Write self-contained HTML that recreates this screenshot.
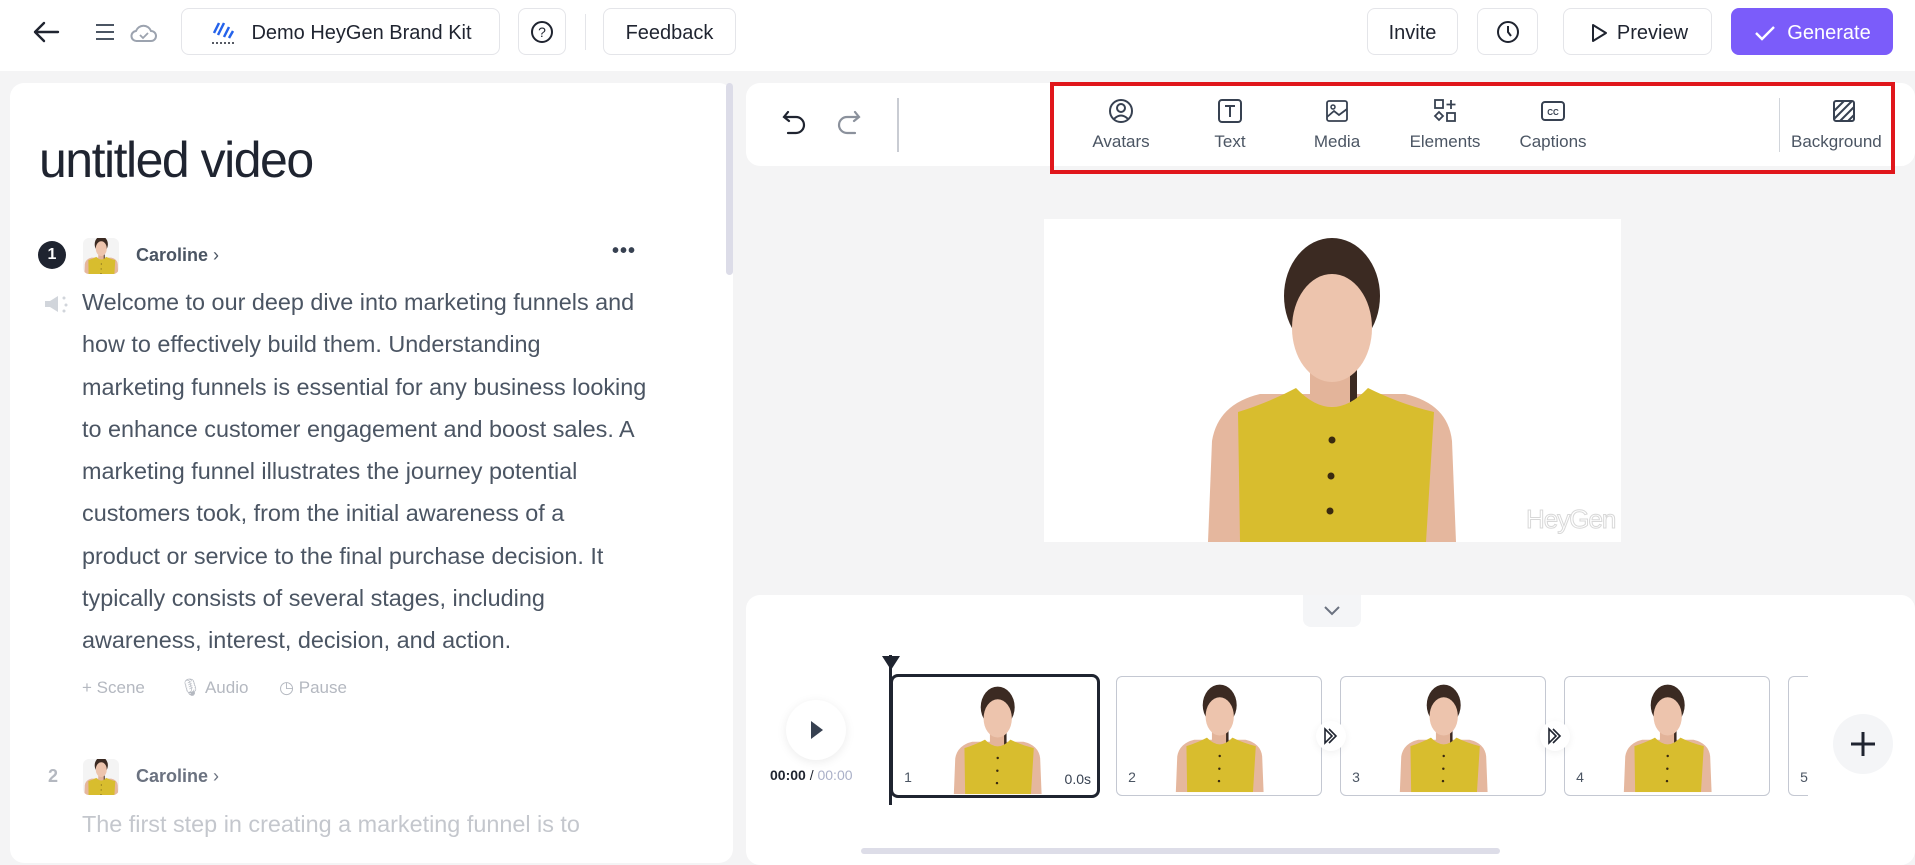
<!DOCTYPE html>
<html><head><meta charset="utf-8"><style>
*{box-sizing:border-box;margin:0;padding:0}
body{width:1915px;height:852px;overflow:hidden;background:#f4f4f5;font-family:"Liberation Sans",sans-serif;position:relative;color:#1f2430}
.a{position:absolute}
.btn{position:absolute;top:8px;height:47px;border:1px solid #e4e5e9;border-radius:8px;background:#fff;display:flex;align-items:center;justify-content:center;font-size:20px;color:#1f2430;padding-top:3px}
.tool{position:absolute;top:98px;width:110px;text-align:center;font-size:17px;color:#4b5563}
.tool svg{display:block;margin:0 auto 8px}
.line{position:absolute;left:82px;font-size:23.4px;color:#4b5563;white-space:nowrap}
.thumb{position:absolute;top:676px;height:120px;border:1px solid #c4c8d2;border-radius:6px;background:#fff;overflow:hidden}
.num{position:absolute;left:6px;bottom:6px;font-size:14px;color:#4b5563;width:18px;height:24px;border-radius:10px;background:#fff;text-align:center;line-height:24px}
</style></head><body>
<svg width="0" height="0" style="position:absolute"><defs><symbol id="p" viewBox="0 0 260 306">
<path d="M8 306 L12 205 Q18 168 60 158 L205 158 Q248 168 252 205 L256 306 Z" fill="#e5b79e"/>
<rect x="110" y="110" width="44" height="60" fill="#e3b49a"/>
<ellipse cx="132" cy="60" rx="48" ry="58" fill="#3b2a22"/>
<rect x="150" y="90" width="7" height="110" fill="#3b2a22"/>
<ellipse cx="132" cy="92" rx="40" ry="54" fill="#edc4ad"/>
<path d="M40 306 L38 176 Q70 166 96 152 Q132 190 168 152 Q200 168 234 176 L226 306 Z" fill="#d8bd2e"/>
<circle cx="132" cy="204" r="3.5" fill="#3a2a10"/><circle cx="131" cy="240" r="3.5" fill="#3a2a10"/><circle cx="130" cy="275" r="3.5" fill="#3a2a10"/>
</symbol></defs></svg>

<!-- top bar -->
<div class="a" style="left:0;top:0;width:1915px;height:71px;background:#fff"></div>
<svg class="a" style="left:32px;top:20px" width="28" height="24" viewBox="0 0 28 24"><path d="M26 12H3M12 3L3 12l9 9" fill="none" stroke="#1f2430" stroke-width="2.4" stroke-linecap="round" stroke-linejoin="round"/></svg>
<svg class="a" style="left:94px;top:22px" width="22" height="20"><path d="M2 3h18M2 10h18M2 17h18" stroke="#4b5563" stroke-width="2"/></svg>
<svg class="a" style="left:130px;top:20px" width="28" height="24" viewBox="0 0 28 24"><path d="M7 21a5 5 0 0 1-1-10 8 8 0 0 1 15 0 5 5 0 0 1 0 10z" fill="none" stroke="#9ca3af" stroke-width="2"/><path d="M10 15l3 3 5-5" fill="none" stroke="#9ca3af" stroke-width="1.8"/></svg>
<div class="btn" style="left:181px;width:319px"><svg width="30" height="28" viewBox="0 0 30 28" style="margin-right:12px"><path d="M10 4l-5 10M15 4l-6 12M20 8l-5 10M24 12l-4 7" stroke="#2563eb" stroke-width="2.5"/><path d="M3 24h24" stroke="#1f2430" stroke-width="1.5" stroke-dasharray="2 2"/></svg>Demo HeyGen Brand Kit</div>
<div class="btn" style="left:518px;width:48px;padding-top:0"><svg width="24" height="24"><circle cx="12" cy="12" r="10" fill="none" stroke="#1f2430" stroke-width="2"/><text x="12" y="17" font-size="14" text-anchor="middle" fill="#1f2430" font-family="Liberation Sans">?</text></svg></div>
<div class="a" style="left:585px;top:14px;width:1px;height:36px;background:#e4e5e9"></div>
<div class="btn" style="left:603px;width:133px">Feedback</div>
<div class="btn" style="left:1367px;width:91px">Invite</div>
<div class="btn" style="left:1477px;width:61px;padding-top:0"><svg width="24" height="24"><circle cx="12" cy="12" r="10" fill="none" stroke="#1f2430" stroke-width="2"/><path d="M12 6v6l3 4" fill="none" stroke="#1f2430" stroke-width="2"/></svg></div>
<div class="btn" style="left:1563px;width:149px"><svg width="22" height="22" style="margin-right:8px"><path d="M6 3l13 8-13 8z" fill="none" stroke="#1f2430" stroke-width="2" stroke-linejoin="round"/></svg>Preview</div>
<div class="btn" style="left:1731px;width:162px;background:#7b5cfa;border-color:#7b5cfa;color:#fff"><svg width="24" height="20" style="margin-right:10px"><path d="M3 10l6 6L21 4" fill="none" stroke="#fff" stroke-width="2.4"/></svg>Generate</div>

<!-- left panel -->
<div class="a" style="left:10px;top:83px;width:723px;height:780px;background:#fff;border-radius:14px"></div>
<div class="a" style="left:726px;top:83px;width:7px;height:192px;background:#dcdce8;border-radius:4px"></div>
<div class="a" style="left:39px;top:131px;font-size:50px;color:#1f2430;letter-spacing:-1.5px">untitled video</div>
<div class="a" style="left:38px;top:241px;width:28px;height:28px;border-radius:50%;background:#1f2430;color:#fff;font-size:16px;font-weight:bold;text-align:center;line-height:28px">1</div>
<div class="a" style="left:83px;top:238px;width:36px;height:36px;border-radius:6px;background:#f4f4f4;overflow:hidden"><svg width="36" height="42" viewBox="0 0 260 306" style="margin-top:-2px"><use href="#p"/></svg></div>
<div class="a" style="left:136px;top:245px;font-size:18px;font-weight:bold;color:#4b5563">Caroline <span style="font-weight:normal">›</span></div>
<div class="a" style="left:612px;top:240px;font-size:20px;font-weight:bold;color:#374151;letter-spacing:1px">•••</div>
<svg class="a" style="left:42px;top:293px" width="28" height="22"><path d="M3 8h5l8-5v16l-8-5H3z" fill="#d1d5db"/><circle cx="22" cy="5" r="1.5" fill="#d1d5db"/><circle cx="24" cy="12" r="1.5" fill="#d1d5db"/><circle cx="22" cy="18" r="1.5" fill="#d1d5db"/></svg>
<div class="line" style="top:289px">Welcome to our deep dive into marketing funnels and</div>
<div class="line" style="top:331px">how to effectively build them. Understanding</div>
<div class="line" style="top:374px">marketing funnels is essential for any business looking</div>
<div class="line" style="top:416px">to enhance customer engagement and boost sales. A</div>
<div class="line" style="top:458px">marketing funnel illustrates the journey potential</div>
<div class="line" style="top:500px">customers took, from the initial awareness of a</div>
<div class="line" style="top:543px">product or service to the final purchase decision. It</div>
<div class="line" style="top:585px">typically consists of several stages, including</div>
<div class="line" style="top:627px">awareness, interest, decision, and action.</div>
<div class="a" style="left:82px;top:678px;font-size:17px;color:#b4b8c0;white-space:nowrap">+ Scene <span style="margin-left:30px">🎙︎ Audio</span> <span style="margin-left:26px">◷ Pause</span></div>
<div class="a" style="left:48px;top:766px;font-size:18px;color:#b4b8c0;font-weight:bold">2</div>
<div class="a" style="left:83px;top:759px;width:36px;height:36px;border-radius:6px;background:#f4f4f4;overflow:hidden"><svg width="36" height="42" viewBox="0 0 260 306" style="margin-top:-2px"><use href="#p"/></svg></div>
<div class="a" style="left:136px;top:766px;font-size:18px;font-weight:bold;color:#6b7280">Caroline <span style="font-weight:normal">›</span></div>
<div class="line" style="top:811px;color:#c4c7cd">The first step in creating a marketing funnel is to</div>

<!-- toolbar -->
<div class="a" style="left:746px;top:83px;width:1169px;height:83px;background:#fff;border-radius:14px"></div>
<svg class="a" style="left:780px;top:108px" width="30" height="30" viewBox="0 0 30 30"><path d="M8 4L4 9l5 4M4 9h12a8 8 0 0 1 0 16H8" fill="none" stroke="#1f2430" stroke-width="2.2" stroke-linecap="round"/></svg>
<svg class="a" style="left:833px;top:108px" width="30" height="30" viewBox="0 0 30 30"><path d="M22 4l4 5-5 4M26 9H14a8 8 0 0 0 0 16h8" fill="none" stroke="#8b919c" stroke-width="2.2" stroke-linecap="round"/></svg>
<div class="a" style="left:897px;top:98px;width:2px;height:54px;background:#c9ccd3"></div>
<div class="a" style="left:1050px;top:82px;width:845px;height:92px;border:4px solid #e0161b"></div>
<div class="tool" style="left:1066px"><svg width="26" height="26"><circle cx="13" cy="13" r="11" fill="none" stroke="#374151" stroke-width="2"/><circle cx="13" cy="10" r="4" fill="none" stroke="#374151" stroke-width="2"/><path d="M6 21q7-7 14 0" fill="none" stroke="#374151" stroke-width="2"/></svg>Avatars</div>
<div class="tool" style="left:1175px"><svg width="26" height="26"><rect x="2" y="2" width="22" height="22" rx="3" fill="none" stroke="#374151" stroke-width="2"/><path d="M8 8h10M13 8v11" stroke="#374151" stroke-width="2"/></svg>Text</div>
<div class="tool" style="left:1282px"><svg width="26" height="26"><rect x="3" y="3" width="20" height="20" rx="2" fill="none" stroke="#374151" stroke-width="1.8"/><circle cx="9" cy="9" r="2" fill="none" stroke="#374151" stroke-width="1.5"/><path d="M3 19l7-6 5 4 8-6" fill="none" stroke="#374151" stroke-width="1.8"/></svg>Media</div>
<div class="tool" style="left:1390px"><svg width="26" height="26"><rect x="3" y="2" width="8" height="8" fill="none" stroke="#374151" stroke-width="1.8"/><path d="M19 2v9M14.5 6.5h9" stroke="#374151" stroke-width="1.8"/><path d="M7 14l4 4-4 4-4-4z" fill="none" stroke="#374151" stroke-width="1.8"/><rect x="15" y="15" width="8" height="8" fill="none" stroke="#374151" stroke-width="1.8"/></svg>Elements</div>
<div class="tool" style="left:1498px"><svg width="26" height="26"><rect x="2" y="4" width="22" height="18" rx="3" fill="none" stroke="#374151" stroke-width="2"/><text x="13" y="17" font-size="8" font-weight="bold" text-anchor="middle" fill="#374151" font-family="Liberation Sans">CC</text></svg>Captions</div>
<div class="a" style="left:1779px;top:98px;width:1px;height:54px;background:#d1d5db"></div>
<div class="tool" style="left:1788px;text-align:left;padding-left:3px;width:103px;overflow:hidden;white-space:nowrap"><svg width="26" height="26" style="margin:0 0 8px 40px"><rect x="3" y="3" width="20" height="20" rx="2" fill="none" stroke="#374151" stroke-width="2"/><path d="M3 13L13 3M3 21L21 3M9 23L23 9M17 23L23 17" stroke="#374151" stroke-width="2"/></svg>Background</div>

<!-- preview -->
<div class="a" style="left:1044px;top:219px;width:577px;height:323px;background:#fff;overflow:hidden">
<svg class="a" style="left:156px;top:17px" width="260" height="306" viewBox="0 0 260 306"><use href="#p"/></svg>
<div class="a" style="left:482px;top:285px;font-size:26px;color:#fff;-webkit-text-stroke:1px #d8d8d8;letter-spacing:-1px">HeyGen</div>
</div>

<!-- timeline -->
<div class="a" style="left:746px;top:595px;width:1169px;height:270px;background:#fff;border-radius:14px"></div>
<div class="a" style="left:1303px;top:595px;width:58px;height:32px;background:#f4f5f7;border-radius:0 0 8px 8px"><svg width="58" height="32"><path d="M22 12l7 7 7-7" fill="none" stroke="#6b7280" stroke-width="2"/></svg></div>
<div class="a" style="left:786px;top:700px;width:60px;height:60px;border-radius:50%;background:#fff;box-shadow:0 2px 10px rgba(0,0,0,.08)"><svg width="60" height="60"><path d="M25 21l12 9-12 9z" fill="#374151"/></svg></div>
<div class="a" style="left:770px;top:767px;font-size:14px;color:#1f2430;font-weight:bold">00:00 <span style="font-weight:normal;color:#1f2430">/</span> <span style="color:#aab0c8;font-weight:normal">00:00</span></div>
<div class="thumb" style="left:890px;top:674px;width:210px;height:124px;border:3px solid #1f2430;border-radius:8px"><svg class="a" style="left:58px;top:8px" width="92" height="110" viewBox="0 0 260 306"><use href="#p"/></svg><div class="num">1</div><div class="a" style="right:6px;bottom:8px;font-size:14px;color:#374151">0.0s</div></div>
<div class="a" style="left:889px;top:655px;width:3px;height:150px;background:#1f2430"></div>
<svg class="a" style="left:881px;top:655px" width="20" height="16"><path d="M1 1h18L10 15z" fill="#1f2430"/></svg>
<div class="thumb" style="left:1116px;width:206px"><svg class="a" style="left:56px;top:6px" width="92" height="110" viewBox="0 0 260 306"><use href="#p"/></svg><div class="num">2</div></div>
<div class="thumb" style="left:1340px;width:206px"><svg class="a" style="left:56px;top:6px" width="92" height="110" viewBox="0 0 260 306"><use href="#p"/></svg><div class="num">3</div></div>
<div class="thumb" style="left:1564px;width:206px"><svg class="a" style="left:56px;top:6px" width="92" height="110" viewBox="0 0 260 306"><use href="#p"/></svg><div class="num">4</div></div>
<div class="thumb" style="left:1788px;width:40px;border-right:none;border-radius:6px 0 0 6px"><div class="num">5</div></div>
<div class="a" style="left:1808px;top:660px;width:40px;height:150px;background:#fff"></div>
<div class="a" style="left:1316px;top:721px;width:30px;height:30px;border-radius:50%;background:#fff;box-shadow:0 2px 8px rgba(0,0,0,.06)"><svg width="30" height="30"><path d="M9 8l7 7-7 7zM13 8l7 7-7 7" fill="none" stroke="#1f2430" stroke-width="1.6"/></svg></div>
<div class="a" style="left:1540px;top:721px;width:30px;height:30px;border-radius:50%;background:#fff;box-shadow:0 2px 8px rgba(0,0,0,.06)"><svg width="30" height="30"><path d="M9 8l7 7-7 7zM13 8l7 7-7 7" fill="none" stroke="#1f2430" stroke-width="1.6"/></svg></div>
<div class="a" style="left:1833px;top:714px;width:60px;height:60px;border-radius:50%;background:#f4f5f7"><svg width="60" height="60"><path d="M30 18v24M18 30h24" stroke="#1f2430" stroke-width="3"/></svg></div>
<div class="a" style="left:861px;top:848px;width:639px;height:6px;background:#dddde8;border-radius:3px"></div>
</body></html>
